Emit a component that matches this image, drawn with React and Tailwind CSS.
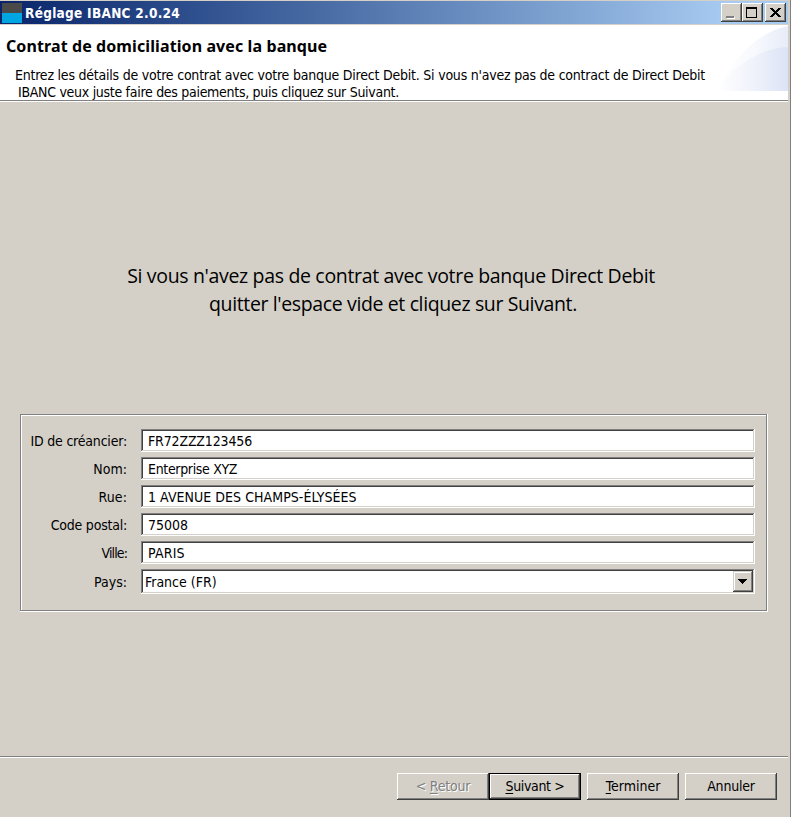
import React from "react";

const rows = [
  { label: "ID de créancier:", value: "FR72ZZZ123456", ls: "tracking-[-0.2px]", vs: "tracking-[-0.15px]" },
  { label: "Nom:", value: "Enterprise XYZ", ls: "tracking-[0px]", vs: "tracking-[-0.33px]" },
  { label: "Rue:", value: "1 AVENUE DES CHAMPS-ÉLYSÉES", ls: "tracking-[0.1px]", vs: "tracking-[0.05px]" },
  { label: "Code postal:", value: "75008", ls: "tracking-[-0.22px]", vs: "tracking-[0px]" },
  { label: "Ville:", value: "PARIS", ls: "tracking-[-0.9px]", vs: "tracking-[0.2px]" },
];

const raised =
  "bg-[#d4d0c8] shadow-[inset_-1px_-1px_#404040,inset_1px_1px_#ffffff,inset_-2px_-2px_#808080]";
const sunken =
  "bg-white shadow-[inset_-1px_-1px_#ffffff,inset_1px_1px_#808080,inset_-2px_-2px_#d4d0c8,inset_2px_2px_#404040]";

function Button({ children, className = "" }) {
  return (
    <button className={`flex h-[27px] w-[92px] items-center justify-center pb-px ${raised} ${className}`}>
      {children}
    </button>
  );
}

function Key({ children }) {
  return <span className="underline decoration-1 underline-offset-2 [text-decoration-skip-ink:none]">{children}</span>;
}

function CaptionButton({ children }) {
  return <button className={`h-[19px] w-[21px] ${raised}`}>{children}</button>;
}

function TitleBar() {
  return (
    <div className="mt-px flex h-[23px] shrink-0 items-center bg-linear-to-r from-[#0a246a] to-[#a6caf0] to-92% pl-[2px] pr-[2px]">
      <div className="h-5 w-5 shrink-0 border-t-10 border-[#4a4a4a] bg-[#00a6e2]" />
      <h1 className="ml-[3px] flex-1 text-[13.5px] leading-5 font-bold tracking-[0.29px] whitespace-nowrap text-white">
        Réglage IBANC 2.0.24
      </h1>
      <div className="flex">
        <CaptionButton>
          <svg width="21" height="19" shapeRendering="crispEdges">
            <path d="M6 14h8v2H6z" fill="#fff" />
            <path d="M5 13h8v2H5z" fill="#808080" />
          </svg>
        </CaptionButton>
        <CaptionButton>
          <svg width="21" height="19" shapeRendering="crispEdges">
            <path d="M4 4h11v11H4zM5 6v8h9V6z" fill="#000" fillRule="evenodd" />
          </svg>
        </CaptionButton>
        <div className="w-[2px]" />
        <CaptionButton>
          <svg width="21" height="19" shapeRendering="crispEdges">
            <path
              d="M5 5h3v1h1v1h1v1h1v-1h1v-1h1v-1h3v1h-1v1h-1v1h-1v1h-1v1h1v1h1v1h1v1h1v1h-3v-1h-1v-1h-1v-1h-1v1h-1v1h-1v1h-3v-1h1v-1h1v-1h1v-1h1v-1h-1v-1h-1v-1h-1v-1h-1z"
              fill="#000"
            />
          </svg>
        </CaptionButton>
      </div>
    </div>
  );
}

function Header() {
  return (
    <header className="mt-px flex h-[75px] shrink-0 justify-between bg-white">
      <div className="w-[710px] shrink-0 whitespace-nowrap">
        <h2 className="mt-[10px] ml-[6px] font-['Noto_Sans','Open_Sans',sans-serif] text-[16px] leading-[22px] font-bold tracking-[0.1px]">
          Contrat de domiciliation avec la banque
        </h2>
        <p className="mt-[10px] ml-[15px] leading-4 tracking-[-0.22px]">
          Entrez les détails de votre contrat avec votre banque Direct Debit. Si vous n'avez pas de contract de Direct Debit
        </p>
        <p className="mt-px ml-[18px] leading-[17px] tracking-[-0.29px]">
          IBANC veux juste faire des paiements, puis cliquez sur Suivant.
        </p>
      </div>
      <svg width="75" height="66" viewBox="0 0 75 66" className="shrink-0">
        <defs>
          <linearGradient id="outer" gradientUnits="userSpaceOnUse" x1="8" y1="0" x2="75" y2="0">
            <stop offset="0" stopColor="#ffffff" />
            <stop offset="0.5" stopColor="#f7f9fd" />
            <stop offset="1" stopColor="#e7ecf8" />
          </linearGradient>
          <linearGradient id="inner" gradientUnits="userSpaceOnUse" x1="4" y1="0" x2="75" y2="0">
            <stop offset="0" stopColor="#ffffff" />
            <stop offset="0.5" stopColor="#f0f3fb" />
            <stop offset="1" stopColor="#dce3f6" />
          </linearGradient>
        </defs>
        <path d="M4 66C18 36 44 7 75 1V66Z" fill="url(#outer)" />
        <path d="M2 66C18 42 48 23 75 22V66Z" fill="url(#inner)" />
      </svg>
    </header>
  );
}

export default function App() {
  return (
    <div className="flex h-[817px] w-[791px] flex-col overflow-hidden border-r border-[#808080] bg-[#d4d0c8] pr-[2px] font-['DejaVu_Sans_Condensed','DejaVu_Sans',sans-serif] text-[14px] text-black">
      <TitleBar />
      <Header />
      <div className="h-[2px] shrink-0 border-t border-b border-t-[#808080] border-b-white" />

      <main className="flex h-[654px] shrink-0 flex-col">
        <div className="mt-[160px] w-[786px] text-center font-['Open_Sans','Noto_Sans',sans-serif] text-[19.5px] leading-7 whitespace-nowrap">
          <p className="pr-1 tracking-[-0.33px]">Si vous n'avez pas de contrat avec votre banque Direct Debit</p>
          <p className="tracking-[-0.37px]">quitter l'espace vide et cliquez sur Suivant.</p>
        </div>

        <section className="mt-[96px] ml-5 h-[198px] w-[748px] bg-[#d4d0c8] pt-[15px] shadow-[inset_-1px_-1px_#ffffff,inset_1px_1px_#808080,inset_-2px_-2px_#808080,inset_2px_2px_#ffffff]">
          <div className="flex flex-col gap-[5px]">
            {rows.map((r) => (
              <div key={r.label} className="flex h-[23px] items-center">
                <label className={`w-[107px] pt-[2px] text-right ${r.ls}`}>{r.label}</label>
                <div className={`ml-[14px] flex h-[23px] w-[614px] items-center pt-[2px] pl-[7px] ${sunken} ${r.vs}`}>
                  {r.value}
                </div>
              </div>
            ))}
            <div className="flex h-[25px] items-center">
              <label className="w-[107px] pt-[2px] text-right tracking-[0px]">Pays:</label>
              <div className={`ml-[14px] flex h-[25px] w-[614px] items-center justify-between pr-[2px] pl-[4px] ${sunken}`}>
                <span className="pt-[2px]">France (FR)</span>
                <button className="flex h-[21px] w-5 items-center justify-center bg-[#d4d0c8] pr-[2px] shadow-[inset_-1px_-1px_#404040,inset_1px_1px_#d4d0c8,inset_-2px_-2px_#808080,inset_2px_2px_#ffffff]">
                  <svg width="9" height="5" shapeRendering="crispEdges">
                    <path d="M0 0h9v1h-1v1h-1v1h-1v1h-1v1h-1v-1h-1v-1h-1v-1h-1v-1h-1z" />
                  </svg>
                </button>
              </div>
            </div>
          </div>
        </section>
      </main>

      <div className="h-[2px] shrink-0 border-t border-b border-t-[#808080] border-b-white" />
      <footer className="mt-[15px] flex justify-end pr-[11px]">
        <Button className="tracking-[-0.2px] text-[#808080] [text-shadow:1px_1px_#ffffff]">
          <span>&lt; <Key>R</Key>etour</span>
        </Button>
        <button className="flex h-[27px] w-[92px] items-center justify-center border border-black pb-px tracking-[-0.35px] shadow-[inset_-1px_-1px_#404040,inset_1px_1px_#ffffff,inset_-2px_-2px_#808080]">
          <span><Key>S</Key>uivant &gt;</span>
        </button>
        <Button className="ml-[6px]">
          <span><Key>T</Key>erminer</span>
        </Button>
        <Button className="ml-[6px] tracking-[-0.2px]">Annuler</Button>
      </footer>
    </div>
  );
}
